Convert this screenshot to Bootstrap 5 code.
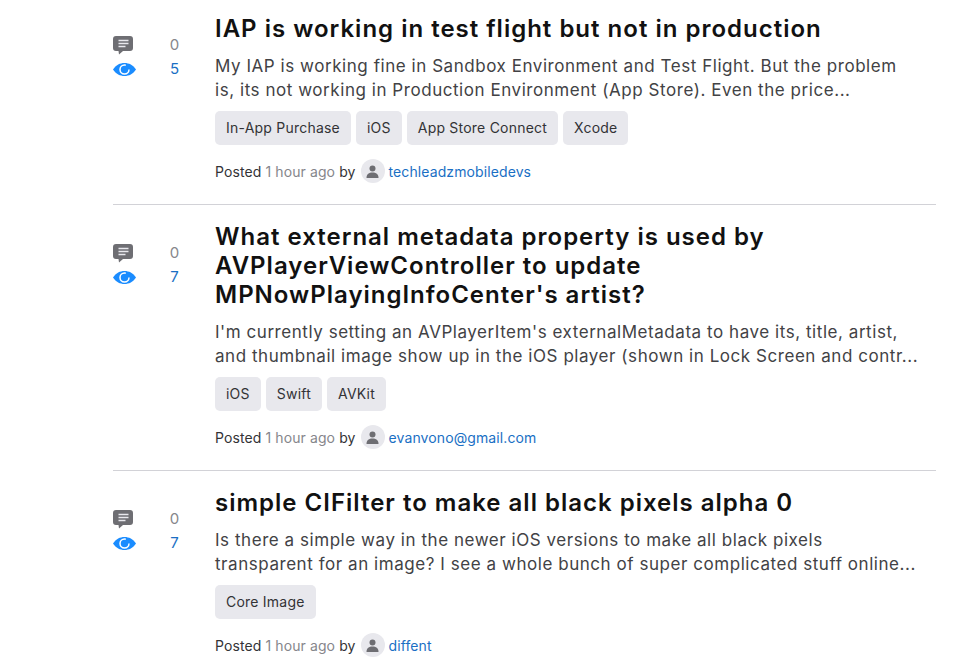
<!DOCTYPE html>
<html lang="en">
<head>
    <meta charset="UTF-8">
    <meta name="viewport" content="width=device-width, initial-scale=1.0">
    <title>Questions</title>
    <link href="https://cdn.jsdelivr.net/npm/bootstrap@5.3.0/dist/css/bootstrap.min.css" rel="stylesheet">
    <style>
        html, body { height: 667px; overflow: hidden; }
        body { font-family: Inter, "Liberation Sans", sans-serif; color: #1d1d1f; background: #fff; }
        .q-list { margin: -3px 19px 0 113px; }
        .q-row { border-bottom: 1px solid #d2d2d7; padding: 17px 0 20px; display: flex; }
        .q-row:last-child { border-bottom: 0; }
        .q-stats { width: 102px; flex: none; padding-top: 19px; }
        .q-stat { display: flex; align-items: center; height: 24px; font-size: 15px; }
        .q-stat svg { display: block; flex: none; }
        .q-bubble { margin-right: 3px; }
        .q-num { width: 39px; margin-left: 19px; text-align: center; }
        .q-zero { color: #86868b; }
        .q-views { color: #1a6fc4; }
        .q-title { font-size: 24px; font-weight: 600; line-height: 29px; letter-spacing: 1px; color: #111; margin: 0 0 11px; }
        .q-desc { font-size: 17px; line-height: 24px; letter-spacing: .55px; color: #424245; margin: 0 0 9px; white-space: nowrap; }
        .q-tags { gap: 5px; }
        .q-tag { background: #e8e8ed; color: #333336; font-size: 14px; line-height: 20px; letter-spacing: .22px; padding: 7px 11px; border-radius: 5px; }
        .q-meta { font-size: 14px; letter-spacing: .1px; color: #333336; margin-top: 13px; height: 26px; }
        .q-ago { color: #86868b; }
        .q-avatar { width: 24px; height: 24px; border-radius: 50%; background: #e8e8ed; display: flex; align-items: center; justify-content: center; margin: 0 4px 0 1px; }
        .q-user { color: #1a6fc4; text-decoration: none; }
    </style>
</head>
<body>
    <div class="q-list">

        <div class="q-row">
            <div class="q-stats">
                <div class="q-stat">
                    <svg class="q-bubble" width="20" height="19" viewBox="0 0 20 19"><path fill="#6e6e73" d="M3 0h14a3 3 0 0 1 3 3v9a3 3 0 0 1-3 3H10l-4 3.500-.5-3.500H3a3 3 0 0 1-3-3V3a3 3 0 0 1 3-3z"/><path stroke="#e8e8ed" stroke-width="1.500" d="M5.500 4.500h10M5.500 7.500h10M5.500 10.500h7"/></svg>
                    <span class="q-num q-zero">0</span>
                </div>
                <div class="q-stat">
                    <svg width="23" height="13" viewBox="0 0 23 13"><path fill="#1a8cff" d="M0 6.500C3 2 7 0 11.500 0S20 2 23 6.500C20 11 16 13 11.500 13S3 11 0 6.500z"/><circle cx="11.500" cy="6.500" r="4.500" fill="none" stroke="#fff" stroke-width="1.500" stroke-dasharray="22 6"/></svg>
                    <span class="q-num q-views">5</span>
                </div>
            </div>
            <div class="flex-grow-1">
                <h2 class="q-title">IAP is working in test flight but not in production</h2>
                <p class="q-desc">My IAP is working fine in Sandbox Environment and Test Flight. But the problem<br>is, its not working in Production Environment (App Store). Even the price...</p>
                <div class="d-flex q-tags">
                    <span class="q-tag">In-App Purchase</span>
                    <span class="q-tag">iOS</span>
                    <span class="q-tag">App Store Connect</span>
                    <span class="q-tag">Xcode</span>
                </div>
                <div class="q-meta d-flex align-items-center">
                    <span>Posted <span class="q-ago">1 hour ago</span> by&nbsp;</span>
                    <span class="q-avatar"><svg width="15" height="15" viewBox="0 0 15 15"><circle cx="7.500" cy="4.500" r="3" fill="#6e6e73"/><path fill="#6e6e73" d="M1.500 14c0-4 2.500-5.500 6-5.500s6 1.500 6 5.500z"/></svg></span>
                    <a class="q-user" href="#">techleadzmobiledevs</a>
                </div>
            </div>
        </div>

        <div class="q-row">
            <div class="q-stats">
                <div class="q-stat">
                    <svg class="q-bubble" width="20" height="19" viewBox="0 0 20 19"><path fill="#6e6e73" d="M3 0h14a3 3 0 0 1 3 3v9a3 3 0 0 1-3 3H10l-4 3.500-.5-3.500H3a3 3 0 0 1-3-3V3a3 3 0 0 1 3-3z"/><path stroke="#e8e8ed" stroke-width="1.500" d="M5.500 4.500h10M5.500 7.500h10M5.500 10.500h7"/></svg>
                    <span class="q-num q-zero">0</span>
                </div>
                <div class="q-stat">
                    <svg width="23" height="13" viewBox="0 0 23 13"><path fill="#1a8cff" d="M0 6.500C3 2 7 0 11.500 0S20 2 23 6.500C20 11 16 13 11.500 13S3 11 0 6.500z"/><circle cx="11.500" cy="6.500" r="4.500" fill="none" stroke="#fff" stroke-width="1.500" stroke-dasharray="22 6"/></svg>
                    <span class="q-num q-views">7</span>
                </div>
            </div>
            <div class="flex-grow-1">
                <h2 class="q-title">What external metadata property is used by<br>AVPlayerViewController to update<br>MPNowPlayingInfoCenter's artist?</h2>
                <p class="q-desc">I'm currently setting an AVPlayerItem's externalMetadata to have its, title, artist,<br>and thumbnail image show up in the iOS player (shown in Lock Screen and contr...</p>
                <div class="d-flex q-tags">
                    <span class="q-tag">iOS</span>
                    <span class="q-tag">Swift</span>
                    <span class="q-tag">AVKit</span>
                </div>
                <div class="q-meta d-flex align-items-center">
                    <span>Posted <span class="q-ago">1 hour ago</span> by&nbsp;</span>
                    <span class="q-avatar"><svg width="15" height="15" viewBox="0 0 15 15"><circle cx="7.500" cy="4.500" r="3" fill="#6e6e73"/><path fill="#6e6e73" d="M1.500 14c0-4 2.500-5.500 6-5.500s6 1.500 6 5.500z"/></svg></span>
                    <a class="q-user" href="#">evanvono@gmail.com</a>
                </div>
            </div>
        </div>

        <div class="q-row">
            <div class="q-stats">
                <div class="q-stat">
                    <svg class="q-bubble" width="20" height="19" viewBox="0 0 20 19"><path fill="#6e6e73" d="M3 0h14a3 3 0 0 1 3 3v9a3 3 0 0 1-3 3H10l-4 3.500-.5-3.500H3a3 3 0 0 1-3-3V3a3 3 0 0 1 3-3z"/><path stroke="#e8e8ed" stroke-width="1.500" d="M5.500 4.500h10M5.500 7.500h10M5.500 10.500h7"/></svg>
                    <span class="q-num q-zero">0</span>
                </div>
                <div class="q-stat">
                    <svg width="23" height="13" viewBox="0 0 23 13"><path fill="#1a8cff" d="M0 6.500C3 2 7 0 11.500 0S20 2 23 6.500C20 11 16 13 11.500 13S3 11 0 6.500z"/><circle cx="11.500" cy="6.500" r="4.500" fill="none" stroke="#fff" stroke-width="1.500" stroke-dasharray="22 6"/></svg>
                    <span class="q-num q-views">7</span>
                </div>
            </div>
            <div class="flex-grow-1">
                <h2 class="q-title">simple CIFilter to make all black pixels alpha 0</h2>
                <p class="q-desc">Is there a simple way in the newer iOS versions to make all black pixels<br>transparent for an image? I see a whole bunch of super complicated stuff online...</p>
                <div class="d-flex q-tags">
                    <span class="q-tag">Core Image</span>
                </div>
                <div class="q-meta d-flex align-items-center">
                    <span>Posted <span class="q-ago">1 hour ago</span> by&nbsp;</span>
                    <span class="q-avatar"><svg width="15" height="15" viewBox="0 0 15 15"><circle cx="7.500" cy="4.500" r="3" fill="#6e6e73"/><path fill="#6e6e73" d="M1.500 14c0-4 2.500-5.500 6-5.500s6 1.500 6 5.500z"/></svg></span>
                    <a class="q-user" href="#">diffent</a>
                </div>
            </div>
        </div>

    </div>

    <script src="https://cdn.jsdelivr.net/npm/bootstrap@5.3.0/dist/js/bootstrap.bundle.min.js"></script>
</body>
</html>
